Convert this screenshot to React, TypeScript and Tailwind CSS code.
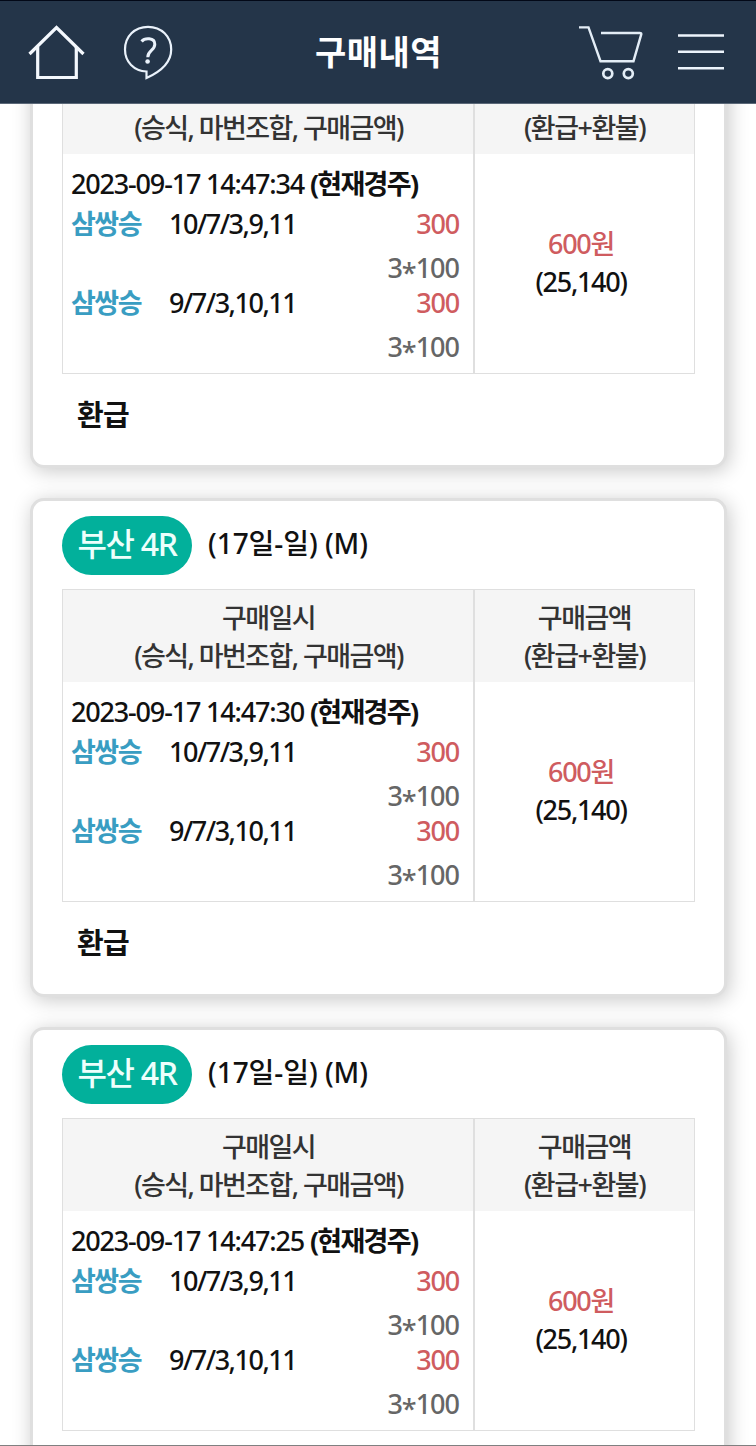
type Bet = { type: string; combo: string; amount: string; unit: string };

type Purchase = { time: string; race?: string; day?: string; refund?: string };

const bets: Bet[] = [
  { type: '삼쌍승', combo: '10/7/3,9,11', amount: '300', unit: '3*100' },
  { type: '삼쌍승', combo: '9/7/3,10,11', amount: '300', unit: '3*100' },
];

const purchases: Purchase[] = [
  { time: '2023-09-17 14:47:34', refund: '환급' },
  { time: '2023-09-17 14:47:30', race: '부산 4R', day: '(17일-일) (M)', refund: '환급' },
  { time: '2023-09-17 14:47:25', race: '부산 4R', day: '(17일-일) (M)' },
];

function Header() {
  return (
    <header className="relative z-10 flex h-[104px] shrink-0 items-center border-t border-b border-t-[#020817] border-b-[#5b6878] bg-[#243549]">
      <svg className="ml-7 h-[56px] w-[58px] shrink-0" viewBox="0 0 58 56" fill="none" stroke="#f4f8fd" strokeWidth="3.2">
        <path d="M1.5 30 28.5 3.5 55.5 30" />
        <path d="M9.7 23V53.5H48.3V23" />
      </svg>
      <svg className="ml-[37px] h-[56px] w-[50px] shrink-0" viewBox="0 0 50 56" fill="none" stroke="#eaf2fb" strokeWidth="2.2">
        <path d="M23.5 47.5V54C38 47.5 48.2 39 48.2 25.5C48.2 12.5 38.5 2.8 25 2.8S2 12.5 2 25.5C2 38 11 47 23.5 47.5Z" />
        <path d="M18.6 17.5C21.5 13.8 31.8 13.2 31.8 20.3C31.8 26.5 24.8 26.5 24.8 33.2" strokeWidth="3" />
        <circle cx="24.6" cy="37.5" r="2.3" fill="#eaf2fb" stroke="none" />
      </svg>
      <h1 className="ml-[142px] w-[128px] shrink-0 text-[34px] leading-[50px] font-bold tracking-[0.5px] whitespace-nowrap text-white">구매내역</h1>
      <svg className="ml-[135px] h-[56px] w-[66px] shrink-0" viewBox="0 0 66 56" fill="none" stroke="#e3edf6" strokeWidth="2.4">
        <path d="M1 3.4H10.5L22.5 37.2H55.5L63.3 10.2Q63.4 9 61.8 9H23" />
        <circle cx="29.8" cy="49.6" r="4.5" strokeWidth="2.7" />
        <circle cx="50.3" cy="49.6" r="4.5" strokeWidth="2.7" />
      </svg>
      <svg className="ml-[34px] h-[40px] w-[46px] shrink-0" viewBox="0 0 46 40" stroke="#edf4fc" strokeWidth="2.4">
        <path d="M0 3.5H46M0 19.8H46M0 36.2H46" />
      </svg>
    </header>
  );
}

function BetRow({ bet }: { bet: Bet }) {
  const [count, price] = bet.unit.split('*');
  return (
    <div className="grid h-[79px] grid-cols-[98px_1fr_auto] grid-rows-[44px_35px]">
      <span className="font-bold tracking-[-1.5px] text-[#399dc2]">{bet.type}</span>
      <span className="w-[127px] text-right font-medium tracking-[-1.5px] whitespace-nowrap text-[#111]">{bet.combo}</span>
      <span className="text-right font-medium tracking-[-1.2px] text-[#cf5c5f]">{bet.amount}</span>
      <span className="col-span-3 text-right font-medium tracking-[-1px] text-[#666]">
        {count}
        <span className="relative top-[5px]">*</span>
        {price}
      </span>
    </div>
  );
}

function PurchaseCard({ time, race, day, refund }: Purchase) {
  return (
    <article className="mb-[30px] h-[498.4px] rounded-[14px] border-[3px] border-[#dfdfdf] bg-white px-[29px] pt-[15px] shadow-[2px_3px_20px_rgba(0,0,0,0.22)]">
      <div className="flex h-[59px] items-start">
        {race && (
          <span className="flex h-[59px] w-[130px] items-center justify-center rounded-[30px] bg-[#02b09b] pb-[3px] text-[32px] font-medium tracking-[-1.3px] text-[#edfffc]">{race}</span>
        )}
        {day && <span className="ml-[16px] text-[28px] leading-[54px] font-medium tracking-[-0.05px] text-[#111]">{day}</span>}
      </div>
      <div className="mt-[14px] grid h-[313px] w-[633px] grid-cols-[412px_1fr] grid-rows-[92px_1fr] border-[1.5px] border-[#dfdfdf] text-[27px] leading-[38px]">
        <div className="border-r-2 border-[#dfdfdf] bg-[#f5f5f5] pt-[9px] pl-[1px] text-center font-medium tracking-[-1.6px] text-[#333]">
          <p>구매일시</p>
          <p>(승식, 마번조합, 구매금액)</p>
        </div>
        <div className="bg-[#f5f5f5] pt-[9px] text-center font-medium tracking-[-1.5px] text-[#333]">
          <p>구매금액</p>
          <p>(환급+환불)</p>
        </div>
        <div className="border-r-2 border-[#dfdfdf] pt-[11px] pr-[14px] pl-[8px]">
          <p className="h-[40px] font-medium tracking-[-1.17px] whitespace-nowrap text-[#111]">
            {time} <b className="tracking-[-1.7px]">(현재경주)</b>
          </p>
          {bets.map((bet) => (
            <BetRow key={bet.combo} bet={bet} />
          ))}
        </div>
        <div className="flex flex-col items-center justify-center pr-[7px] pb-[1px] font-medium tracking-[-1.3px]">
          <p className="text-[#cf5c5f]">600원</p>
          <p className="text-[#111]">(25,140)</p>
        </div>
      </div>
      {refund && <p className="mt-[20px] ml-[15px] text-[29px] leading-[42px] font-bold tracking-[-0.8px] text-[#111]">{refund}</p>}
    </article>
  );
}

export default function App() {
  return (
    <div className={`font-["Noto_Sans","Noto_Sans_CJK_KR",sans-serif] flex h-[1446px] w-[756px] flex-col overflow-hidden border-b border-[#808080] bg-white`}>
      <Header />
      <main className="min-h-0 flex-1 px-[30px]">
        <div className="-mt-[134.1px] w-[697px]">
          {purchases.map((purchase) => (
            <PurchaseCard key={purchase.time} {...purchase} />
          ))}
        </div>
      </main>
    </div>
  );
}
